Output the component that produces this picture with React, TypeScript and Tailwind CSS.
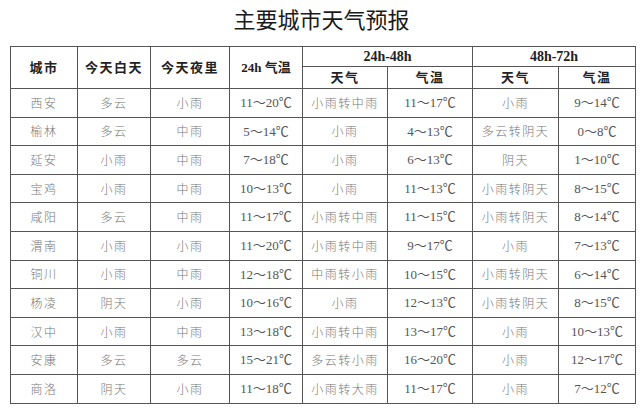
const rows = [
  ["西安", "多云", "小雨", "11～20℃", "小雨转中雨", "11～17℃", "小雨", "9～14℃"],
  ["榆林", "多云", "中雨", "5～14℃", "小雨", "4～13℃", "多云转阴天", "0～8℃"],
  ["延安", "小雨", "中雨", "7～18℃", "小雨", "6～13℃", "阴天", "1～10℃"],
  ["宝鸡", "小雨", "中雨", "10～13℃", "小雨", "11～13℃", "小雨转阴天", "8～15℃"],
  ["咸阳", "多云", "中雨", "11～17℃", "小雨转中雨", "11～15℃", "小雨转阴天", "8～14℃"],
  ["渭南", "小雨", "小雨", "11～20℃", "小雨转中雨", "9～17℃", "小雨", "7～13℃"],
  ["铜川", "小雨", "中雨", "12～18℃", "中雨转小雨", "10～15℃", "小雨转阴天", "6～14℃"],
  ["杨凌", "阴天", "小雨", "10～16℃", "小雨", "12～13℃", "小雨转阴天", "8～15℃"],
  ["汉中", "小雨", "中雨", "13～18℃", "小雨转中雨", "13～17℃", "小雨", "10～13℃"],
  ["安康", "多云", "多云", "15～21℃", "多云转小雨", "16～20℃", "小雨", "12～17℃"],
  ["商洛", "阴天", "小雨", "11～18℃", "小雨转大雨", "11～17℃", "小雨", "7～12℃"],
];

const widths = [67, 73, 79, 73, 85, 85, 86, 77];

// 温度列用衬线数字
const isTemp = (i: number) => i === 3 || i === 5 || i === 7;

export default function App() {
  return (
    <div className="w-[643px] h-[410px] bg-white overflow-hidden">
      {/* Title */}
      <div className="h-[46px] pt-[4px] text-center text-[22px] leading-[28px] text-[#1a1a1a] [font-family:'Noto_Sans_CJK_SC',sans-serif]">
        主要城市天气预报
      </div>

      <table className="ml-[10px] w-[625px] table-fixed border-collapse border-[1.5px] border-[#444] text-center">
        <colgroup>
          {widths.map((w, i) => (
            <col key={i} style={{ width: w }} />
          ))}
        </colgroup>
        <thead className="font-bold text-[#222] text-[13px] tracking-[1.5px] [font-family:'Liberation_Serif','Noto_Sans_CJK_SC',serif]">
          <tr className="h-[20px]">
            <th rowSpan={2} className="border border-[#555] font-bold">城市</th>
            <th rowSpan={2} className="border border-[#555] font-bold">今天白天</th>
            <th rowSpan={2} className="border border-[#555] font-bold">今天夜里</th>
            <th rowSpan={2} className="border border-[#555] font-bold tracking-normal">24h 气温</th>
            <th colSpan={2} className="border border-[#555] font-bold tracking-normal text-[14px] leading-[18px]">24h-48h</th>
            <th colSpan={2} className="border border-[#555] font-bold tracking-normal text-[14px] leading-[18px]">48h-72h</th>
          </tr>
          <tr className="h-[22px]">
            <th className="border border-[#555] font-bold">天气</th>
            <th className="border border-[#555] font-bold">气温</th>
            <th className="border border-[#555] font-bold">天气</th>
            <th className="border border-[#555] font-bold">气温</th>
          </tr>
        </thead>
        <tbody className="text-[#777] text-[12px]">
          {rows.map((r, ri) => (
            <tr key={ri} className="h-[28.6px]">
              {r.map((c, ci) => (
                <td
                  key={ci}
                  className={
                    isTemp(ci)
                      ? "border border-[#555] p-0 text-[13px] text-[#555] [font-family:'Liberation_Serif','Noto_Sans_CJK_SC',serif]"
                      : "border border-[#555] p-0 font-light tracking-[1.5px] [font-family:'Noto_Sans_CJK_SC',sans-serif]"
                  }
                >
                  {c}
                </td>
              ))}
            </tr>
          ))}
        </tbody>
      </table>
    </div>
  );
}
